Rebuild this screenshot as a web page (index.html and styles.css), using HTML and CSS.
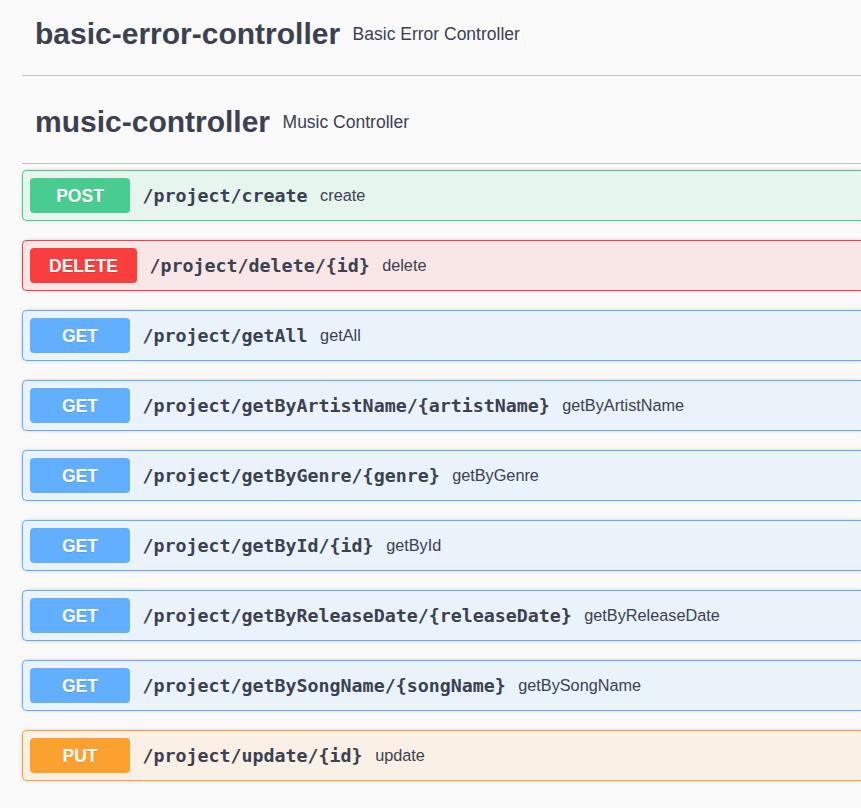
FILE: index.html
```html
<!DOCTYPE html>
<html lang="en">
<head>
<meta charset="utf-8">
<title>Swagger UI</title>
<link rel="stylesheet" href="styles.css">
</head>
<body>
<div class="wrap">
  <section class="tag-section first">
    <h3 class="tag"><span class="tag-name">basic-error-controller</span><small class="tag-desc">Basic Error Controller</small></h3>
  </section>
  <section class="tag-section">
    <h3 class="tag"><span class="tag-name">music-controller</span><small class="tag-desc">Music Controller</small></h3>
    <div class="ops">
      <div class="op post"><span class="method">POST</span><span class="path">/project/create</span><span class="desc">create</span></div>
      <div class="op delete"><span class="method">DELETE</span><span class="path">/project/delete/{id}</span><span class="desc">delete</span></div>
      <div class="op get"><span class="method">GET</span><span class="path">/project/getAll</span><span class="desc">getAll</span></div>
      <div class="op get"><span class="method">GET</span><span class="path">/project/getByArtistName/{artistName}</span><span class="desc">getByArtistName</span></div>
      <div class="op get"><span class="method">GET</span><span class="path">/project/getByGenre/{genre}</span><span class="desc">getByGenre</span></div>
      <div class="op get"><span class="method">GET</span><span class="path">/project/getById/{id}</span><span class="desc">getById</span></div>
      <div class="op get"><span class="method">GET</span><span class="path">/project/getByReleaseDate/{releaseDate}</span><span class="desc">getByReleaseDate</span></div>
      <div class="op get"><span class="method">GET</span><span class="path">/project/getBySongName/{songName}</span><span class="desc">getBySongName</span></div>
      <div class="op put"><span class="method">PUT</span><span class="path">/project/update/{id}</span><span class="desc">update</span></div>
    </div>
  </section>
</div>
</body>
</html>
```

FILE: styles.css
```css
html, body {
  margin: 0;
  padding: 0;
  background: #fafafa;
  overflow: hidden;
  color: #3b4151;
  font-family: "Liberation Sans", Arial, sans-serif;
}

.wrap {
  padding-left: 22px;
  margin-top: -7px;
}

.tag {
  display: flex;
  align-items: center;
  height: 82px;
  margin: 0 0 5px;
  padding: 0 0 0 13px;
  border-bottom: 1px solid rgba(59, 65, 81, 0.3);
  box-sizing: content-box;
}

.tag-name {
  font-size: 30px;
  font-weight: 700;
  color: #3b4151;
}

.tag-desc {
  font-size: 17.5px;
  font-weight: 400;
  margin: 0 12.5px;
  color: #3b4151;
}

.ops {
  padding-top: 1px;
}

.op {
  display: flex;
  align-items: center;
  padding: 7px;
  margin: 0 0 19px;
  border: 1px solid;
  border-right-width: 0;
  border-radius: 5px 0 0 5px;
  box-shadow: 0 0 3.5px rgba(0, 0, 0, 0.19);
  white-space: nowrap;
}

.method {
  box-sizing: border-box;
  min-width: 100px;
  height: 35px;
  padding: 7.5px 19px;
  line-height: 20px;
  font-size: 17.5px;
  font-weight: 700;
  text-align: center;
  color: #fff;
  border-radius: 4px;
  text-shadow: 0 1px 0 rgba(0, 0, 0, 0.1);
}

.path {
  padding: 0 12.5px;
  font-family: "DejaVu Sans Mono", "Liberation Mono", monospace;
  font-weight: 700;
  font-size: 18.3px;
  color: #3b4151;
}

.desc {
  font-size: 16.25px;
  color: #3b4151;
}

.post { background: rgba(73, 204, 144, 0.1); border-color: #49cc90; }
.post .method { background: #49cc90; }

.delete { background: rgba(249, 62, 62, 0.1); border-color: #f93e3e; }
.delete .method { background: #f93e3e; }

.get { background: rgba(97, 175, 254, 0.1); border-color: #61affe; }
.get .method { background: #61affe; }

.put { background: rgba(252, 161, 48, 0.1); border-color: #fca130; }
.put .method { background: #fca130; }
```
